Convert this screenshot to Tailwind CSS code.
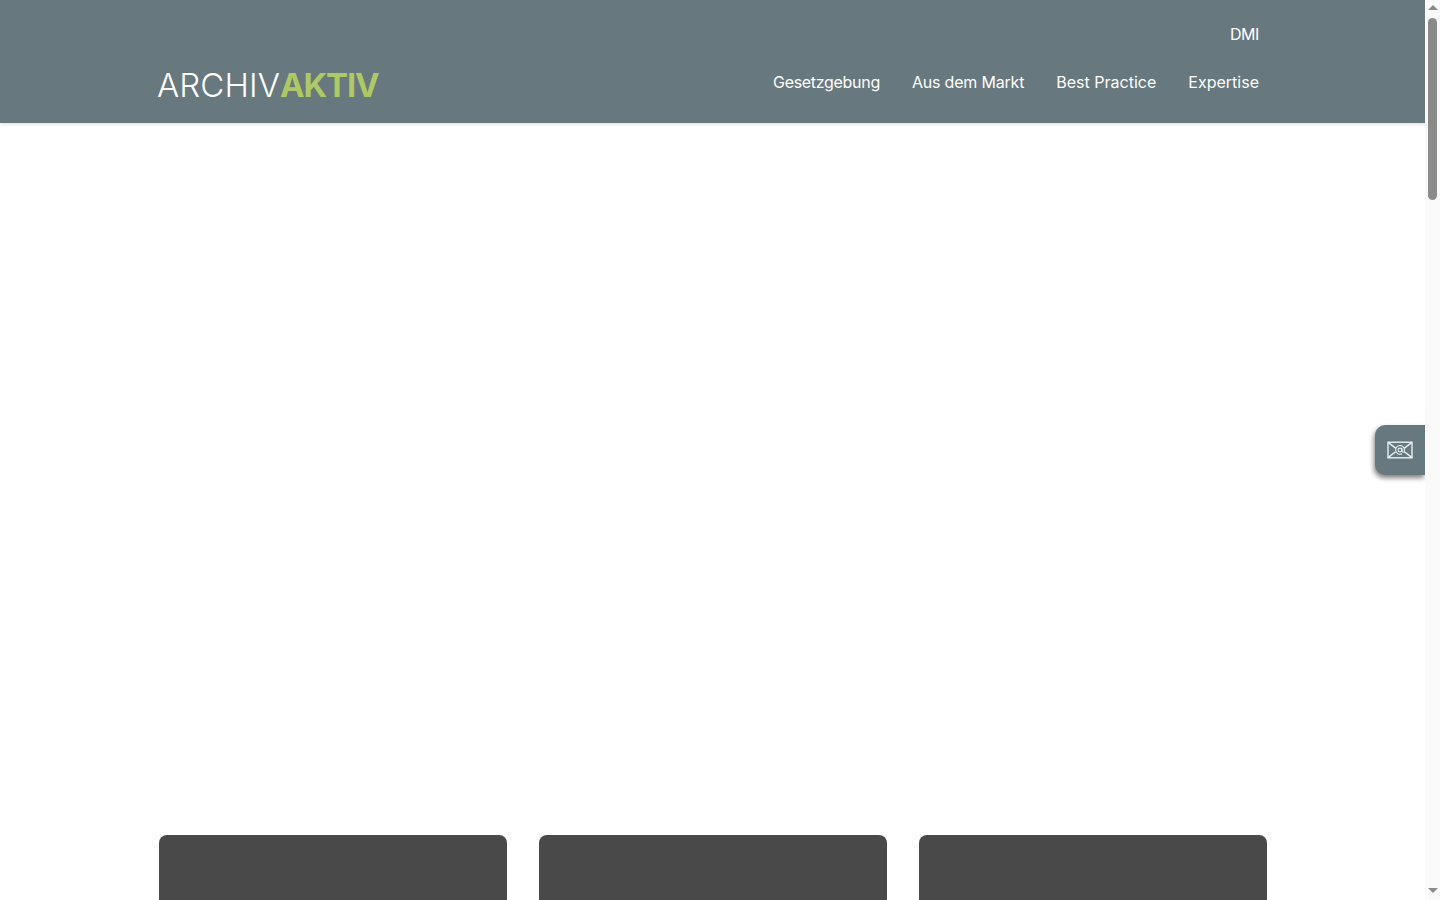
<!DOCTYPE html>
<html lang="de">
<head>
    <meta charset="UTF-8">
    <meta name="viewport" content="width=device-width, initial-scale=1.0">
    <title>ArchivAktiv</title>
    <script src="https://cdn.jsdelivr.net/npm/@tailwindcss/browser@4"></script>
</head>
<body class="bg-white h-screen overflow-hidden flex font-['Inter',sans-serif]">
    <div class="flex-1 min-w-0 h-full overflow-hidden">
        <header class="h-[123px] bg-[#67787e] shadow-[0_1px_3px_rgba(0,0,0,0.15)]">
            <div class="w-[1109px] ml-[158px] h-full flex flex-col">
                <div class="h-[69px] pr-[8px] pt-[24px] flex justify-end">
                    <a href="#" class="text-white text-[16px] leading-[20px] tracking-[-0.4px]">DMI</a>
                </div>
                <div class="flex items-start justify-between pr-[8px]">
                    <a href="#" class="text-[33px] leading-[32px] whitespace-nowrap -ml-[1px]">
                        <span class="text-white font-light tracking-[0.1px]">ARCHIV</span><span class="text-[#adc864] font-bold tracking-[-1.2px]">AKTIV</span>
                    </a>
                    <nav class="flex gap-[32px] text-white text-[16px] leading-[20px] pt-[3px]">
                        <a href="#" class="tracking-[-0.3px]">Gesetzgebung</a>
                        <a href="#" class="tracking-[-0.2px]">Aus dem Markt</a>
                        <a href="#" class="tracking-[0.02px]">Best Practice</a>
                        <a href="#" class="tracking-[0px]">Expertise</a>
                    </nav>
                </div>
            </div>
        </header>
        <main class="w-[1108px] ml-[159px] mt-[712px] grid grid-cols-3 gap-[32px]">
            <div class="h-[300px] bg-[#494949] rounded-lg"></div>
            <div class="h-[300px] bg-[#494949] rounded-lg"></div>
            <div class="h-[300px] bg-[#494949] rounded-lg"></div>
        </main>
    </div>

    <!-- contact tab -->
    <a href="#" class="fixed top-[425px] right-[15px] w-[50px] h-[50px] bg-[#67787e] rounded-l-[10px] shadow-[-1px_3px_5px_rgba(0,0,0,0.5)] flex items-center justify-center">
        <svg class="w-[26px] h-[18px]" viewBox="0 0 26 18" fill="none" stroke="#e8f0f2" stroke-width="1.4">
            <rect x="1" y="1.2" width="24" height="15.6" />
            <path d="M1 1.4 L9 7.4 M25 1.4 L17 7.4 M1 16.6 L8.6 10.8 M25 16.6 L17.4 10.8" />
            <path stroke-width="1.1" d="M15 12.8 A4.4 4.4 0 1 1 17.4 9 V10 A1.1 1.1 0 0 1 15 10 V7.4" />
            <circle cx="13" cy="9" r="1.9" stroke-width="1.1" />
        </svg>
    </a>

    <!-- scrollbar -->
    <aside class="w-[15px] h-full shrink-0 bg-[#fafafa] flex flex-col items-center justify-between relative">
        <div class="mt-[5px] w-0 h-0 border-l-[5px] border-r-[5px] border-b-[5px] border-l-transparent border-r-transparent border-b-[#8a8a8a]"></div>
        <div class="absolute top-[18px] left-[3px] w-[9px] h-[182px] rounded-full bg-[#8a8a8a]"></div>
        <div class="mb-[7px] w-0 h-0 border-l-[5px] border-r-[5px] border-t-[5px] border-l-transparent border-r-transparent border-t-[#8a8a8a]"></div>
    </aside>
</body>
</html>
